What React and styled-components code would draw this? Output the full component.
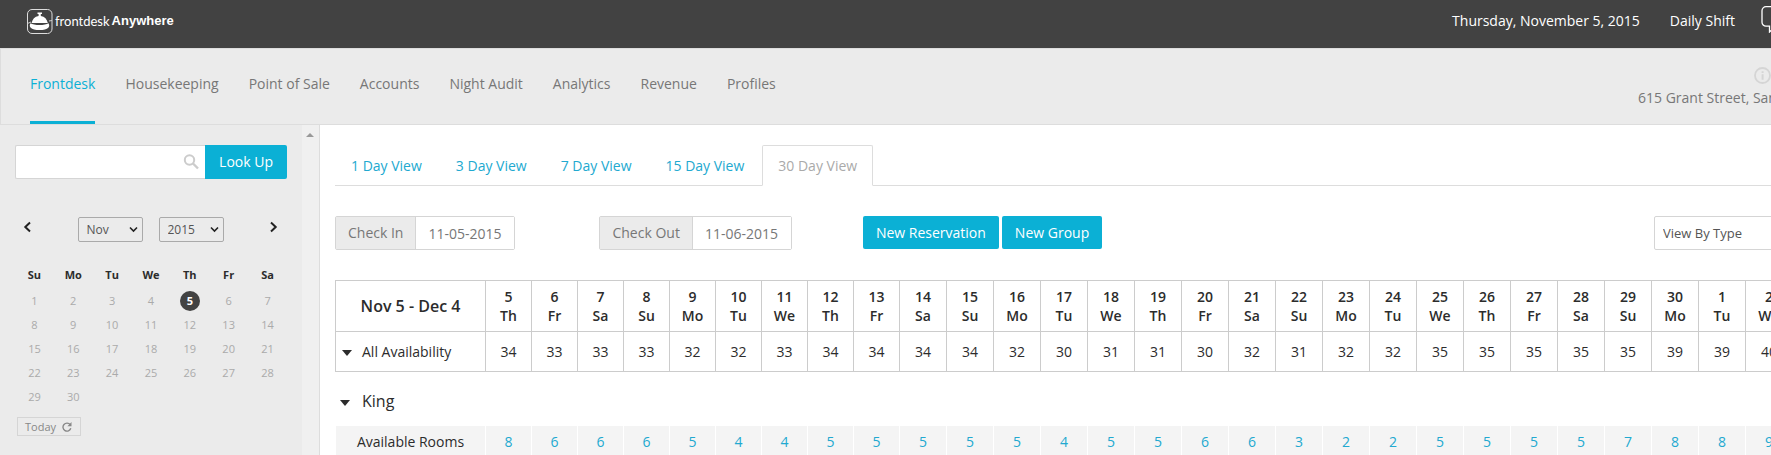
import React, { useState } from "react";
import styled, { createGlobalStyle } from "styled-components";

const color = {
  accent: "#0bb0d5",
  link: "#22a9d0",
  dark: "#424242",
  panel: "#ebebeb",
  line: "#ddd",
  field: "#d5d5d5",
  grid: "#ccc",
  muted: "#777",
  faint: "#aaa",
  ink: "#2c2c2c",
};

const GlobalStyle = createGlobalStyle`
  *, *::before, *::after { box-sizing: border-box; }
  body { margin: 0; background: #fff; }
  body, button, input, select { font-family: "Open Sans", "Noto Sans", sans-serif; font-size: 14px; }
  button { padding: 0; border: 0; background: none; cursor: pointer; }
  a { text-decoration: none; }
`;

const Page = styled.div`
  display: flex;
  flex-direction: column;
  height: 100vh;
  overflow: hidden;
  line-height: 20px;
  color: ${color.ink};
`;

const TopBar = styled.header`
  display: flex;
  flex: none;
  align-items: center;
  justify-content: space-between;
  height: 48px;
  padding-left: 26px;
  background: ${color.dark};
  color: #fff;
  overflow: hidden;
`;

const Brand = styled.a`
  display: flex;
  align-items: center;
  gap: 2px;
  padding-bottom: 6px;
  color: #fff;
  font-family: Lato, sans-serif;
  font-size: 13px;
`;

const BrandStrong = styled.b`
  font-family: "Liberation Sans", sans-serif;
  font-size: 13px;
`;

const Session = styled.div`
  display: flex;
  align-items: center;
  gap: 30px;
  margin-right: -16px;
  padding-bottom: 6px;
  white-space: nowrap;
`;

const ShiftGroup = styled.span`
  display: flex;
  align-items: center;
  gap: 26px;
`;

const NavBar = styled.div`
  display: flex;
  flex: none;
  justify-content: space-between;
  height: 77px;
  padding-left: 29px;
  background: ${color.panel};
  border: 1px solid ${color.line};
  border-right: 0;
`;

const Nav = styled.nav`
  display: flex;
  gap: 30px;
`;

const NavLink = styled.a`
  padding-top: 25px;
  color: ${({ $active }) => ($active ? color.accent : color.muted)};
  border-bottom: 3px solid ${({ $active }) => ($active ? color.accent : "transparent")};
  white-space: nowrap;
`;

const Property = styled.div`
  display: flex;
  flex-direction: column;
  width: 133px;
  padding-top: 18px;
  gap: 4px;
  color: ${color.muted};
  white-space: nowrap;
  overflow: hidden;

  svg { flex: none; align-self: flex-end; }
`;

const Body = styled.div`
  display: flex;
  flex: 1;
  min-height: 0;
`;

const Sidebar = styled.aside`
  display: flex;
  flex: none;
  width: 320px;
  background: ${color.panel};
  border-right: 1px solid ${color.line};
`;

const SidebarContent = styled.div`
  flex: 1;
  min-width: 0;
  padding: 20px 15px 0;
`;

const ScrollStrip = styled.div`
  flex: none;
  width: 17px;
  padding: 7px 4px;
  background: #f0f0f0;
  line-height: 0;
`;

const Search = styled.form`
  display: flex;
  height: 34px;
`;

const SearchField = styled.label`
  display: flex;
  flex: 1;
  align-items: center;
  padding-right: 6px;
  background: #fff;
  border: 1px solid ${color.field};
  border-right: 0;
  border-radius: 2px 0 0 2px;
  min-width: 0;
`;

const SearchInput = styled.input`
  flex: 1;
  min-width: 0;
  padding: 0 10px;
  border: 0;
  outline: 0;
  background: transparent;
`;

const PrimaryButton = styled.button`
  height: ${({ $tall }) => ($tall ? 34 : 33)}px;
  padding: ${({ $tall }) => ($tall ? "0 14px 2px" : "0 13px")};
  color: #fff;
  background: ${color.accent};
  border-radius: ${({ $tall }) => ($tall ? "0 2px 2px 0" : "2px")};
  white-space: nowrap;
`;

const MonthBar = styled.div`
  display: flex;
  align-items: center;
  justify-content: space-between;
  height: 25px;
  margin-top: 38px;
  padding: 0 9px 0 8px;
`;

const Arrow = styled.button`
  width: 8px;
  height: 18px;
  margin-bottom: 5px;
  line-height: 0;
`;

const MonthSelects = styled.div`
  display: flex;
  gap: 16px;
`;

const SelectBox = styled.span`
  display: grid;
  align-items: center;

  > * { grid-area: 1 / 1; }
  svg { justify-self: end; margin-right: 5px; pointer-events: none; }
`;

const SmallSelect = styled.select`
  appearance: none;
  width: 65px;
  height: 25px;
  padding: 0 8px;
  font-size: 12px;
  color: #555;
  background: transparent;
  border: 1px solid ${color.faint};
  border-radius: 2px;
`;

const Calendar = styled.table`
  width: 100%;
  margin-top: 19px;
  table-layout: fixed;
  border-spacing: 0;
  font-size: 11px;
  line-height: 20px;
  text-align: center;

  th { height: 28px; padding: 0; font-weight: 700; }
  td { height: 24px; padding: 0; color: ${color.faint}; }
`;

const Day = styled.span`
  display: block;
  width: 20px;
  height: 20px;
  margin: 0 auto;
  border-radius: 50%;
  color: ${({ $today }) => ($today ? "#fff" : "inherit")};
  background: ${({ $today }) => ($today ? color.dark : "transparent")};
  font-weight: ${({ $today }) => ($today ? 700 : 400)};
`;

const TodayButton = styled.button`
  display: flex;
  align-items: center;
  gap: 6px;
  height: 19px;
  margin: 8px 2px;
  padding: 0 8px 0 7px;
  font-size: 11px;
  color: #888;
  border: 1px solid ${color.field};
`;

const Main = styled.main`
  flex: 1;
  min-width: 0;
  padding: 20px 0 0 15px;
  overflow: hidden;
`;

const Tabs = styled.nav`
  display: flex;
  gap: 2px;
  height: 41px;
  border-bottom: 1px solid ${color.line};
`;

const Tab = styled.a`
  height: 41px;
  padding: 10px 15px;
  color: ${({ $active }) => ($active ? color.faint : color.link)};
  background: ${({ $active }) => ($active ? "#fff" : "transparent")};
  border: 1px solid ${({ $active }) => ($active ? color.line : "transparent")};
  border-bottom-color: ${({ $active }) => ($active ? "#fff" : "transparent")};
  border-radius: 2px 2px 0 0;
  white-space: nowrap;
`;

const Toolbar = styled.div`
  display: flex;
  align-items: flex-start;
  margin-top: 30px;
`;

const DateGroup = styled.label`
  display: flex;
  height: 34px;
  margin-right: ${({ $gap }) => $gap}px;
  border: 1px solid ${color.field};
  border-radius: 2px;
  color: ${color.muted};
`;

const DateLabel = styled.span`
  padding: 6px 12px;
  background: ${color.panel};
  border-right: 1px solid ${color.field};
  white-space: nowrap;
`;

const DateInput = styled.input`
  width: 98px;
  padding: 0 12px;
  border: 0;
  color: ${color.muted};
  background: #fff;
`;

const Actions = styled.div`
  display: flex;
  gap: 3px;
`;

const ViewSelect = styled.select`
  appearance: none;
  width: 160px;
  height: 34px;
  margin: 0 -43px 0 auto;
  padding: 0 8px;
  font-size: 13px;
  color: #555;
  background: #fff;
  border: 1px solid ${color.field};
  border-radius: 2px;
`;

const Grid = styled.table`
  width: max-content;
  border-spacing: 0;
  text-align: center;

  th, td { padding: 0; font-weight: 400; }
`;

const AvailabilityGrid = styled(Grid)`
  margin-top: 30px;
  border: solid ${color.grid};
  border-width: 1px 0 0 1px;

  th, td { border: solid ${color.grid}; border-width: 0 1px 1px 0; }
  thead th { height: 51px; line-height: 19px; font-weight: 600; }
  thead th:first-child { font-size: 16px; }
  tbody tr { height: 40px; }
`;

const RoomGrid = styled(Grid)`
  border-left: 1px solid #fff;

  th, td { height: 32px; background: #f4f4f4; border-right: 1px solid #fff; }
  a { color: ${color.link}; }
`;

const LabelCol = styled.col`
  width: 150px;
`;

const DayCol = styled.col`
  width: ${({ $wide }) => ($wide ? 47 : 46)}px;
`;

const Toggle = styled.button`
  display: flex;
  align-items: center;
  gap: 10px;
  padding-left: 6px;
  color: ${color.ink};

  svg { margin-top: 3px; }
`;

const SectionTitle = styled.h2`
  display: flex;
  align-items: center;
  height: 54px;
  margin: 0;
  padding-top: 3px;
  font-weight: 400;

  ${Toggle} { font-size: 16px; gap: 12px; padding-left: 5px; }
  ${Toggle} svg { margin-top: 4px; }
`;

const NAV = ["Frontdesk", "Housekeeping", "Point of Sale", "Accounts", "Night Audit", "Analytics", "Revenue", "Profiles"];
const TABS = ["1 Day View", "3 Day View", "7 Day View", "15 Day View", "30 Day View"];
const WEEK = ["Su", "Mo", "Tu", "We", "Th", "Fr", "Sa"];
const TOTALS = [34, 33, 33, 33, 32, 32, 33, 34, 34, 34, 34, 32, 30, 31, 31, 30, 32, 31, 32, 32, 35, 35, 35, 35, 35, 39, 39, 40];
const KING = [8, 6, 6, 6, 5, 4, 4, 5, 5, 5, 5, 5, 4, 5, 5, 6, 6, 3, 2, 2, 5, 5, 5, 5, 7, 8, 8, 9];
const DAYS = TOTALS.map((_, i) => ({ date: i < 26 ? i + 5 : i - 25, name: WEEK[(i + 4) % 7] }));
const WEEKS = [0, 1, 2, 3, 4].map((w) => WEEK.map((_, d) => w * 7 + d + 1));

const BellLogo = () => (
  <svg width="27" height="27" viewBox="0 0 27 27" aria-hidden="true">
    <rect x="1.5" y="1.5" width="24.5" height="24" rx="4.5" fill="none" stroke="#ddd" />
    <path d="M1.5 15.5L5 14M23 13L26 12.500" stroke="#ccc" />
    <path d="M11.500 4.500h4.500v1.600h-1.200v1.800c4 .6 6.200 3.200 7 7H5.600c.8-3.800 3-6.400 7-7V6.100h-1.100z" fill="#fff" />
    <path d="M4.500 15.300c3 2.400 15 2.400 18 0 .8 1.600 1.200 3-.2 4.400-1.600 1.500-4.600 2.300-8.800 2.300s-7.200-.8-8.800-2.300c-1.400-1.400-1-2.800-.2-4.400z" fill="#fff" />
  </svg>
);

const ChatIcon = () => (
  <svg width="26" height="28" viewBox="0 0 26 28" fill="none" stroke="#fff" strokeWidth="1.300" aria-hidden="true">
    <path d="M5 1.700h16a4 4 0 0 1 4 4v11.500a4 4 0 0 1-4 4h-6.500L8.500 27v-5.800H5a4 4 0 0 1-4-4V5.700a4 4 0 0 1 4-4z" />
  </svg>
);

const InfoIcon = () => (
  <svg width="17" height="17" viewBox="0 0 17 17" aria-hidden="true">
    <circle cx="8.500" cy="8.500" r="7.500" fill="none" stroke="#d5d5d5" strokeWidth="1.800" />
    <path d="M7.600 4.300h2v1.800h-2zM7.600 7.200h2v5.500h-2z" fill="#d5d5d5" />
  </svg>
);

const SearchIcon = () => (
  <svg width="16" height="16" viewBox="0 0 16 16" fill="none" stroke="#ccc" aria-hidden="true">
    <circle cx="6.500" cy="6" r="4.700" strokeWidth="2" />
    <path d="M10 9.500l5 5" strokeWidth="2.400" />
  </svg>
);

const Chevron = ({ d, w = 8, h = 12, stroke = 2 }) => (
  <svg width={w} height={h} viewBox={`0 0 ${w} ${h}`} fill="none" stroke="#222" strokeWidth={stroke} aria-hidden="true">
    <path d={d} />
  </svg>
);

const RefreshIcon = () => (
  <svg width="10" height="10" viewBox="0 0 10 10" aria-hidden="true">
    <path d="M8.200 2.700A4 4 0 1 0 8.800 6.300" fill="none" stroke="#888" strokeWidth="1.400" />
    <path d="M9.500 0v4.300H5.400z" fill="#888" />
  </svg>
);

const Triangle = ({ up }) => (
  <svg width={up ? 8 : 10} height={up ? 4 : 6} viewBox={up ? "0 0 8 4" : "0 0 10 6"} aria-hidden="true">
    <path d={up ? "M0 4h8L4 0z" : "M0 0h10L5 6z"} fill={up ? "#999" : color.ink} />
  </svg>
);

const Columns = () => (
  <colgroup>
    <LabelCol />
    {DAYS.map((d, i) => <DayCol key={i} $wide={i > 8} />)}
  </colgroup>
);

export default function App() {
  const [open, setOpen] = useState(true);
  const halt = (e) => e.preventDefault();

  return (
    <Page>
      <GlobalStyle />
      <TopBar>
        <Brand href="#">
          <BellLogo />
          <span>frontdesk</span>
          <BrandStrong>Anywhere</BrandStrong>
        </Brand>
        <Session>
          <span>Thursday, November 5, 2015</span>
          <ShiftGroup>
            <span>Daily Shift</span>
            <button type="button" aria-label="Messages"><ChatIcon /></button>
          </ShiftGroup>
        </Session>
      </TopBar>

      <NavBar>
        <Nav>
          {NAV.map((name, i) => <NavLink key={name} href="#" $active={i === 0}>{name}</NavLink>)}
        </Nav>
        <Property>
          <InfoIcon />
          <span>615 Grant Street, San</span>
        </Property>
      </NavBar>

      <Body>
        <Sidebar>
          <SidebarContent>
            <Search onSubmit={halt}>
              <SearchField>
                <SearchInput type="text" aria-label="Look up" />
                <SearchIcon />
              </SearchField>
              <PrimaryButton $tall>Look Up</PrimaryButton>
            </Search>

            <MonthBar>
              <Arrow type="button" aria-label="Previous month"><Chevron d="M7 1.500L2.300 6L7 10.500" /></Arrow>
              <MonthSelects>
                <SelectBox>
                  <SmallSelect aria-label="Month"><option>Nov</option></SmallSelect>
                  <Chevron d="M1 1.500L4.500 5L8 1.500" w={9} h={7} stroke={1.6} />
                </SelectBox>
                <SelectBox>
                  <SmallSelect aria-label="Year"><option>2015</option></SmallSelect>
                  <Chevron d="M1 1.500L4.500 5L8 1.500" w={9} h={7} stroke={1.6} />
                </SelectBox>
              </MonthSelects>
              <Arrow type="button" aria-label="Next month"><Chevron d="M1 1.500L5.700 6L1 10.500" /></Arrow>
            </MonthBar>

            <Calendar>
              <thead>
                <tr>{WEEK.map((d) => <th key={d} scope="col">{d}</th>)}</tr>
              </thead>
              <tbody>
                {WEEKS.map((week) => (
                  <tr key={week[0]}>
                    {week.map((d) => <td key={d}>{d <= 30 && <Day $today={d === 5}>{d}</Day>}</td>)}
                  </tr>
                ))}
              </tbody>
            </Calendar>
            <TodayButton type="button">Today <RefreshIcon /></TodayButton>
          </SidebarContent>
          <ScrollStrip><Triangle up /></ScrollStrip>
        </Sidebar>

        <Main>
          <Tabs>
            {TABS.map((name, i) => <Tab key={name} href="#" $active={i === 4}>{name}</Tab>)}
          </Tabs>

          <Toolbar>
            <DateGroup $gap={84}>
              <DateLabel>Check In</DateLabel>
              <DateInput type="text" defaultValue="11-05-2015" />
            </DateGroup>
            <DateGroup $gap={71}>
              <DateLabel>Check Out</DateLabel>
              <DateInput type="text" defaultValue="11-06-2015" />
            </DateGroup>
            <Actions>
              <PrimaryButton type="button">New Reservation</PrimaryButton>
              <PrimaryButton type="button">New Group</PrimaryButton>
            </Actions>
            <ViewSelect aria-label="View"><option>View By Type</option></ViewSelect>
          </Toolbar>

          <AvailabilityGrid>
            <Columns />
            <thead>
              <tr>
                <th scope="col">Nov 5 - Dec 4</th>
                {DAYS.map((d, i) => <th key={i} scope="col">{d.date}<br />{d.name}</th>)}
              </tr>
            </thead>
            <tbody>
              <tr>
                <th scope="row"><Toggle type="button"><Triangle />All Availability</Toggle></th>
                {TOTALS.map((n, i) => <td key={i}>{n}</td>)}
              </tr>
            </tbody>
          </AvailabilityGrid>

          <SectionTitle>
            <Toggle type="button" aria-expanded={open} onClick={() => setOpen(!open)}><Triangle />King</Toggle>
          </SectionTitle>
          {open && (
            <RoomGrid>
              <Columns />
              <tbody>
                <tr>
                  <th scope="row">Available Rooms</th>
                  {KING.map((n, i) => <td key={i}><a href="#">{n}</a></td>)}
                </tr>
              </tbody>
            </RoomGrid>
          )}
        </Main>
      </Body>
    </Page>
  );
}
